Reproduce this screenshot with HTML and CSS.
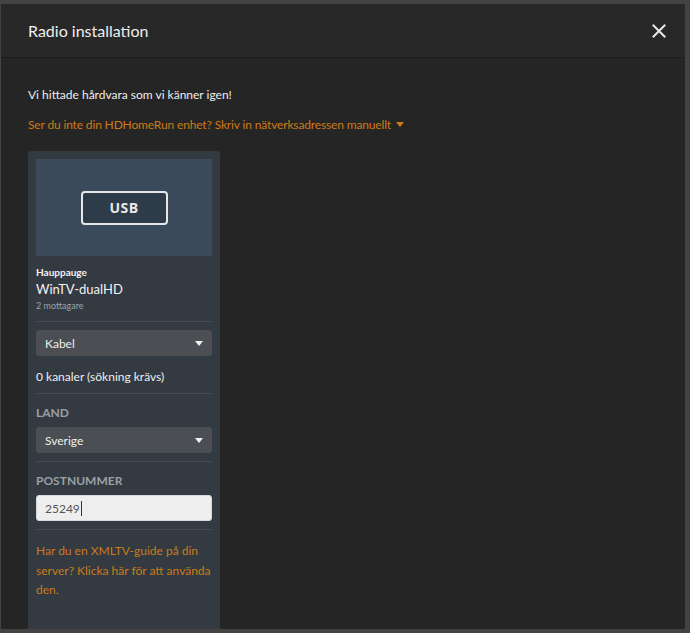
FILE: index.html
```html
<!DOCTYPE html>
<html>
<head>
<meta charset="utf-8">
<link rel="stylesheet" href="styles.css">
</head>
<body>
<div class="modal">
  <div class="header">
    <div class="title">Radio installation</div>
    <svg class="close" width="14" height="14" viewBox="0 0 14 14"><path d="M1.5 1.5 L12.5 12.5 M12.5 1.5 L1.5 12.5" stroke="#e8e8e8" stroke-width="2" stroke-linecap="square"/></svg>
  </div>
  <div class="body">
    <p class="found">Vi hittade hårdvara som vi känner igen!</p>
    <p class="manual">Ser du inte din HDHomeRun enhet? Skriv in nätverksadressen manuellt <span class="caret"></span></p>
    <div class="card">
      <div class="thumb"><div class="usb">USB</div></div>
      <div class="brand">Hauppauge</div>
      <div class="model">WinTV-dualHD</div>
      <div class="tuners">2 mottagare</div>
      <div class="sep"></div>
      <div class="select"><span>Kabel</span><span class="tri"></span></div>
      <div class="channels">0 kanaler (sökning krävs)</div>
      <div class="sep"></div>
      <div class="label">LAND</div>
      <div class="select"><span>Sverige</span><span class="tri"></span></div>
      <div class="sep"></div>
      <div class="label">POSTNUMMER</div>
      <div class="input">25249<span class="cursor"></span></div>
      <div class="sep"></div>
      <div class="xmltv">Har du en XMLTV-guide på din server? Klicka här för att använda den.</div>
    </div>
  </div>
</div>
</body>
</html>
```

FILE: styles.css
```css
html, body {
  margin: 0;
  padding: 0;
  background: #434343;
  font-family: Lato, "Open Sans", sans-serif;
}
.modal {
  margin: 4px 0 0 1px;
  width: 684px;
  height: 625px;
  background: #252525;
  overflow: hidden;
  display: flex;
  flex-direction: column;
}
.header {
  height: 54px;
  flex: none;
  box-sizing: border-box;
  background: #282828;
  border-bottom: 1px solid #1c1c1c;
  display: flex;
  align-items: center;
  justify-content: space-between;
  padding: 0 19px 0 27px;
}
.title {
  color: #eeeeee;
  font-size: 16px;
}
.close { display: block; }
.body {
  padding: 28px 0 0 27px;
}
.found {
  margin: 0;
  color: #eeeeee;
  font-size: 12px;
  line-height: 17px;
}
.manual {
  margin: 13px 0 0;
  color: #cc7b19;
  font-size: 12px;
  line-height: 17px;
  letter-spacing: -0.15px;
}
.caret {
  display: inline-block;
  width: 0;
  height: 0;
  border-left: 4px solid transparent;
  border-right: 4px solid transparent;
  border-top: 5px solid #cc7b19;
  vertical-align: 2px;
  margin-left: 2px;
}
.card {
  margin-top: 18px;
  width: 192px;
  box-sizing: border-box;
  padding: 8px 8px 40px;
  background: #333a42;
  border-radius: 3px;
}
.thumb {
  height: 97px;
  background: #3b4a5b;
  display: flex;
  align-items: center;
  justify-content: center;
}
.usb {
  width: 87px;
  height: 34px;
  box-sizing: border-box;
  border: 2px solid #e6e6e6;
  border-radius: 4px;
  background: #2e3c4a;
  color: #e8e8e8;
  font-family: "Open Sans", sans-serif;
  font-weight: 700;
  font-size: 14px;
  display: flex;
  align-items: center;
  justify-content: center;
  letter-spacing: 0.5px;
}
.brand {
  margin-top: 9px;
  color: #f2f2f2;
  font-size: 10px;
  font-weight: 700;
  line-height: 14px;
}
.model {
  color: #f2f2f2;
  font-size: 13px;
  line-height: 18px;
  margin-top: 1px;
}
.tuners {
  color: #9da3aa;
  font-size: 9px;
  line-height: 14px;
  margin-top: 1px;
}
.sep {
  height: 1px;
  background: #444b53;
  margin: 8px 0 8px;
}
.select {
  height: 26px;
  box-sizing: border-box;
  background: #4b4e52;
  border-radius: 3px;
  display: flex;
  align-items: center;
  justify-content: space-between;
  padding: 0 9px;
  color: #eeeeee;
  font-size: 12px;
}
.tri {
  width: 0;
  height: 0;
  border-left: 4px solid transparent;
  border-right: 4px solid transparent;
  border-top: 5px solid #f0f0f0;
}
.channels {
  color: #eeeeee;
  font-size: 12px;
  line-height: 17px;
  margin: 12px 0 1px;
}
.label {
  color: #9aa0a7;
  font-size: 12px;
  font-weight: 700;
  line-height: 17px;
  margin: 10px 0 6px;
}
.input {
  height: 26px;
  box-sizing: border-box;
  background: #eeeeee;
  border-radius: 3px;
  border: 1px solid #d8d8d8;
  display: flex;
  align-items: center;
  padding: 0 8px;
  color: #555;
  font-size: 12px;
}
.cursor {
  display: inline-block;
  width: 1px;
  height: 15px;
  background: #333;
  margin-left: 1px;
}
.xmltv {
  margin-top: 11px;
  color: #cc7b19;
  font-size: 12px;
  line-height: 19.5px;
}
```
